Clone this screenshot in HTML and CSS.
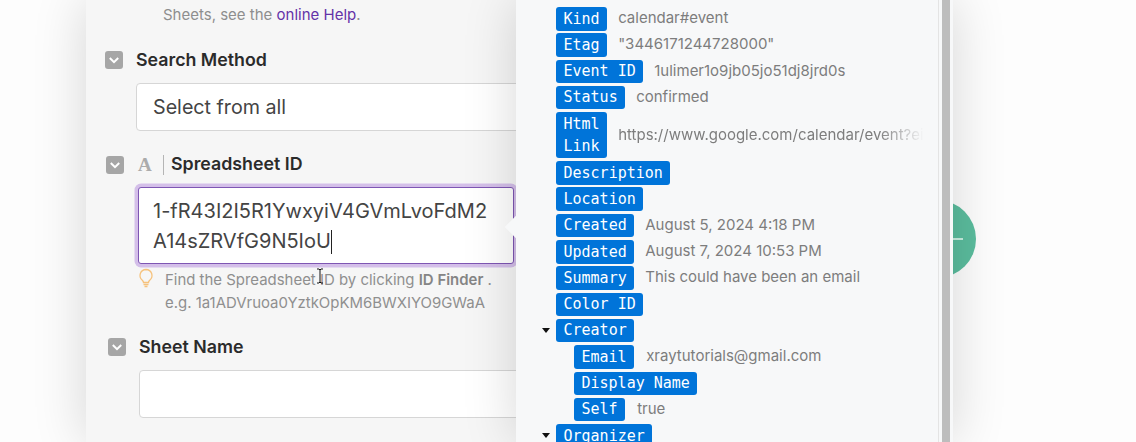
FILE: index.html
```html
<!DOCTYPE html>
<html lang="en">
<head>
<meta charset="utf-8">
<title>Spreadsheet module</title>
<link rel="stylesheet" href="styles.css">
</head>
<body>
<div class="stage">
  <section class="form">
    <p class="help">Sheets, see the <a class="link" href="#">online Help</a>.</p>

    <div class="field field-search">
      <div class="head">
        <span class="chk"><svg viewBox="0 0 18 18" width="18" height="18"><path d="M4.800 7 9 11.200 13.200 7" fill="none" stroke="#fff" stroke-width="2"/></svg></span>
        <span class="label">Search Method</span>
      </div>
      <div class="box box-select">Select from all</div>
    </div>

    <div class="field field-id">
      <div class="head">
        <span class="chk"><svg viewBox="0 0 18 18" width="18" height="18"><path d="M4.800 7 9 11.200 13.200 7" fill="none" stroke="#fff" stroke-width="2"/></svg></span>
        <span class="type">A</span>
        <span class="sep"></span>
        <span class="label">Spreadsheet ID</span>
      </div>
      <div class="box box-input">1-fR43I2I5R1YwxyiV4GVmLvoFdM2<br>A14sZRVfG9N5IoU<span class="caret"></span></div>
      <div class="hint">
        <svg class="bulb" viewBox="0 0 16 20" width="16" height="20"><path d="M8 1.500a6 6 0 0 0-3.700 10.700c.8.700 1.200 1.500 1.200 2.300h5c0-.8.400-1.600 1.200-2.300A6 6 0 0 0 8 1.500Z" fill="none" stroke="#f6c27c" stroke-width="1.300"/><path d="M5.500 16.500h5M6.500 18.500h3" stroke="#f6c27c" stroke-width="1.300"/></svg>
        <p class="hint-text">Find the Spreadsheet ID by clicking <b>ID Finder</b> .<br>e.g. 1a1ADVruoa0YztkOpKM6BWXIYO9GWaA</p>
      </div>
      <svg class="ibeam" viewBox="0 0 8 16" width="8" height="16"><path d="M1 1h2l1 1 1-1h2M4 2v12M1 15h2l1-1 1 1h2" fill="none" stroke="#111" stroke-width="1"/></svg>
    </div>

    <div class="field field-sheet">
      <div class="head">
        <span class="chk"><svg viewBox="0 0 18 18" width="18" height="18"><path d="M4.800 7 9 11.200 13.200 7" fill="none" stroke="#fff" stroke-width="2"/></svg></span>
        <span class="label">Sheet Name</span>
      </div>
      <div class="box box-empty"></div>
    </div>
  </section>

  <section class="output">
    <div class="tree">
      <div class="row"><span class="key">Kind</span><span class="val">calendar#event</span></div>
      <div class="row"><span class="key">Etag</span><span class="val">"3446171244728000"</span></div>
      <div class="row"><span class="key">Event ID</span><span class="val">1ulimer1o9jb05jo51dj8jrd0s</span></div>
      <div class="row"><span class="key">Status</span><span class="val">confirmed</span></div>
      <div class="row row-center"><span class="key">Html<br>Link</span><span class="val val-fade">https://www.google.com/calendar/event?eid=MXVsaW1lcjFvOWpiMDVqbzUxZGo4anJk</span></div>
      <div class="row"><span class="key">Description</span></div>
      <div class="row"><span class="key">Location</span></div>
      <div class="row"><span class="key">Created</span><span class="val">August 5, 2024 4:18 PM</span></div>
      <div class="row"><span class="key">Updated</span><span class="val">August 7, 2024 10:53 PM</span></div>
      <div class="row"><span class="key">Summary</span><span class="val">This could have been an email</span></div>
      <div class="row"><span class="key">Color ID</span></div>
      <div class="row row-open"><span class="key">Creator</span></div>
      <div class="row row-sub"><span class="key">Email</span><span class="val">xraytutorials@gmail.com</span></div>
      <div class="row row-sub"><span class="key">Display Name</span></div>
      <div class="row row-sub"><span class="key">Self</span><span class="val">true</span></div>
      <div class="row row-open"><span class="key">Organizer</span></div>
    </div>
    <div class="scroll"></div>
  </section>

  <div class="fab"><span class="fab-bar"></span></div>
</div>
</body>
</html>
```

FILE: styles.css
```css
* { box-sizing: border-box; }
html, body { margin: 0; padding: 0; height: 442px; overflow: hidden; background: #fff; }
body { font-family: Inter, "Liberation Sans", sans-serif; }

.stage {
  position: relative;
  width: 1136px;
  height: 442px;
  overflow: hidden;
  display: flex;
  padding-left: 86px;
  background: #fdfdfd;
}

/* left form */
.form {
  width: 430px;
  flex: none;
  height: 442px;
  overflow: hidden;
  background: #f6f6f6;
  padding: 5px 0 0 19px;
  box-shadow: 0 0 50px rgba(0,0,0,.16);
}
.help { margin: 0 0 0 58px; font-size: 15px; line-height: 20px; color: #8e8e8e; }
.link { color: #6432a8; text-decoration: none; }

.field { position: relative; }
.field-search { margin-top: 26px; }
.field-id { margin-top: 25px; margin-left: 1px; }
.field-sheet { margin-top: 23px; margin-left: 3px; }

.head { display: flex; align-items: center; height: 18px; }
.chk { width: 18px; height: 18px; flex: none; border-radius: 3px; background: #a6a6a6; display: flex; }
.label { margin-left: 13px; font-size: 17.800px; font-weight: 600; line-height: 18px; color: #2b2b2b; white-space: nowrap; }
.type { margin-left: 14px; width: 14px; font-family: "Liberation Serif", serif; font-weight: 700; font-size: 19px; line-height: 18px; color: #ababab; }
.sep { margin-left: 11px; width: 1px; height: 20px; background: #b5b5b5; }
.field-id .label { margin-left: 7px; margin-top: -2px; }

.box { background: #fff; color: #444; }
.box-select, .box-empty {
  margin-left: 31px;
  width: 420px;
  height: 48px;
  border: 1px solid #d6d6d6;
  border-radius: 4px;
}
.box-select { margin-top: 14px; padding-left: 16px; font-size: 19.700px; line-height: 47px; }
.box-empty { margin-top: 14px; }
.box-input {
  margin: 13px 0 0 32px;
  width: 376px;
  height: 77px;
  border: 1.500px solid #7e56b3;
  border-radius: 3px;
  box-shadow: 0 0 0 3.500px #d4bfe9;
  padding: 8px 0 0 14px;
  font-size: 20px;
  line-height: 30px;
  white-space: nowrap;
  color: #444;
}
.caret { display: inline-block; width: 1px; height: 24px; background: #222; vertical-align: -6px; }

.hint { display: flex; margin: 4px 0 0 32px; }
.bulb { flex: none; }
.hint-text { margin: 1px 0 0 11px; font-size: 14.950px; line-height: 23px; color: #8f8f8f; white-space: nowrap; }
.hint-text b { font-weight: 600; color: #858585; }
.ibeam { position: absolute; left: 210px; top: 112px; }

/* right panel */
.output {
  position: relative;
  z-index: 2;
  flex: none;
  width: 437px;
  height: 442px;
  display: flex;
  background: #f7f8f9;
  box-shadow: 0 0 50px rgba(0,0,0,.16);
}
.output::before {
  content: "";
  position: absolute;
  left: -8px;
  top: 219px;
  width: 16px;
  height: 16px;
  transform: rotate(45deg);
  background: #f7f8f9;
}
.tree {
  width: 423px;
  height: 442px;
  flex: none;
  overflow: hidden;
  padding: 7px 14px 0 40px;
  border-right: 1px solid #e4e4e4;
}
.row {
  display: flex;
  align-items: flex-start;
  margin-bottom: 2.820px;
  position: relative;
}
.row-center { align-items: center; }
.row-sub { margin-left: 18px; }
.row-open::before {
  content: "";
  position: absolute;
  left: -14px;
  top: 9px;
  border-style: solid;
  border-width: 5px 4.500px 0;
  border-color: #111 transparent transparent;
}
.key {
  flex: none;
  background: #0074d9;
  color: #fff;
  font-family: "DejaVu Sans Mono", monospace;
  font-size: 15px;
  line-height: 22.500px;
  padding: .5px 7.500px;
  border-radius: 3px;
  white-space: nowrap;
}
.val {
  margin-left: 11px;
  font-size: 15px;
  line-height: 22px;
  color: #7d7d7d;
  white-space: nowrap;
}
.row-sub .val { margin-left: 12px; }
.val-fade {
  flex: 1;
  min-width: 0;
  overflow: hidden;
  -webkit-mask-image: linear-gradient(to right, #000 85%, transparent 100%);
  mask-image: linear-gradient(to right, #000 85%, transparent 100%);
}
.scroll { width: 8px; margin-left: 3px; background: #bdbdbd; flex: none; }

/* green action button behind the panel */
.fab {
  position: absolute;
  left: 898px;
  top: 200px;
  width: 78px;
  height: 78px;
  border-radius: 50%;
  background: #5bbd9e;
}
.fab-bar { position: absolute; left: 55px; top: 38px; width: 10px; height: 1.500px; background: #c9eee1; }
```
